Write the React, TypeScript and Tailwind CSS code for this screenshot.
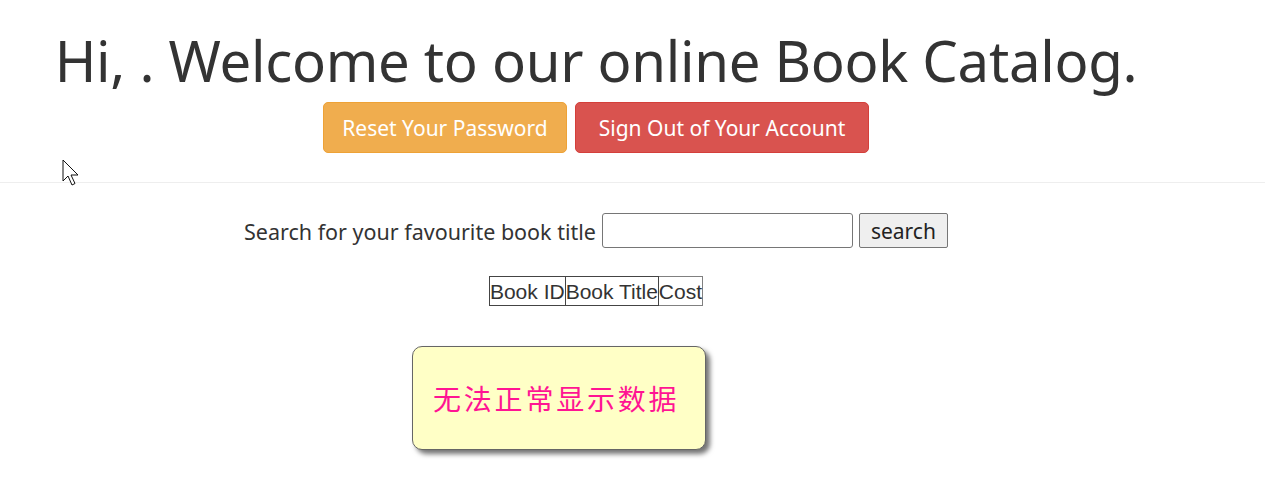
export default function App() {
  return (
    <div className="relative min-h-[488px] bg-white text-[#333] font-['Noto_Sans',sans-serif]">
      {/* mouse pointer left in the capture */}
      <svg className="absolute left-[62px] top-[159px]" width="20" height="28" viewBox="0 0 20 28">
        <path d="M1 1 L1 22 L6 17 L10 26 L13 24.5 L9 16 L16 16 Z" fill="#fff" stroke="#111" strokeWidth="1" />
      </svg>

      <div className="w-[1192px] pt-[24px] text-center">
        <h1 className="text-[56.3px] leading-[72px] tracking-[-0.3px]">Hi, . Welcome to our online Book Catalog.</h1>
        <div className="mt-[6px] flex justify-center gap-[8px]">
          <button className="h-[51px] w-[244px] rounded-[5px] border border-[#eea236] bg-[#f0ad4e] pt-[2px] text-[21px] text-white">
            Reset Your Password
          </button>
          <button className="h-[51px] w-[294px] rounded-[5px] border border-[#d43f3a] bg-[#d9534f] pt-[2px] text-[21px] text-white">
            Sign Out of Your Account
          </button>
        </div>
      </div>

      <hr className="mt-[29px] border-t border-[#eee]" />

      <div className="w-[1192px] pt-[30px] text-center">
        <form className="flex items-center justify-center gap-[6px] text-[21.5px]">
          <label className="pt-[3px]">Search for your favourite book title</label>
          <input className="h-[35px] w-[251px] rounded-[3px] border border-[#767676]" />
          <button type="button" className="h-[35px] w-[89px] rounded-[2px] border border-[#767676] bg-[#efefef] pt-[2px] text-[21px] text-[#222]">
            search
          </button>
        </form>

        <table className="mx-auto mt-[28px] border border-[#808080] font-['Liberation_Sans',Arial,sans-serif] text-[21px]">
          <thead>
            <tr>
              <th className="border border-[#444] px-0 pt-[2px] font-normal leading-[26px]">Book ID</th>
              <th className="border border-[#444] px-0 pt-[2px] font-normal leading-[26px]">Book Title</th>
              <th className="border border-[#808080] px-0 pt-[2px] font-normal leading-[26px]">Cost</th>
            </tr>
          </thead>
        </table>
      </div>

      <div className="ml-[412px] mt-[40px] flex h-[104px] w-[294px] items-center rounded-[10px] border border-[#666] bg-[#ffffc6] pl-[20px] shadow-[4px_4px_5px_rgba(0,0,0,0.55)]">
        <span className="font-['Noto_Sans_CJK_SC',serif] text-[28px] tracking-[2.8px] text-[#ff1493]">无法正常显示数据</span>
      </div>
    </div>
  );
}
